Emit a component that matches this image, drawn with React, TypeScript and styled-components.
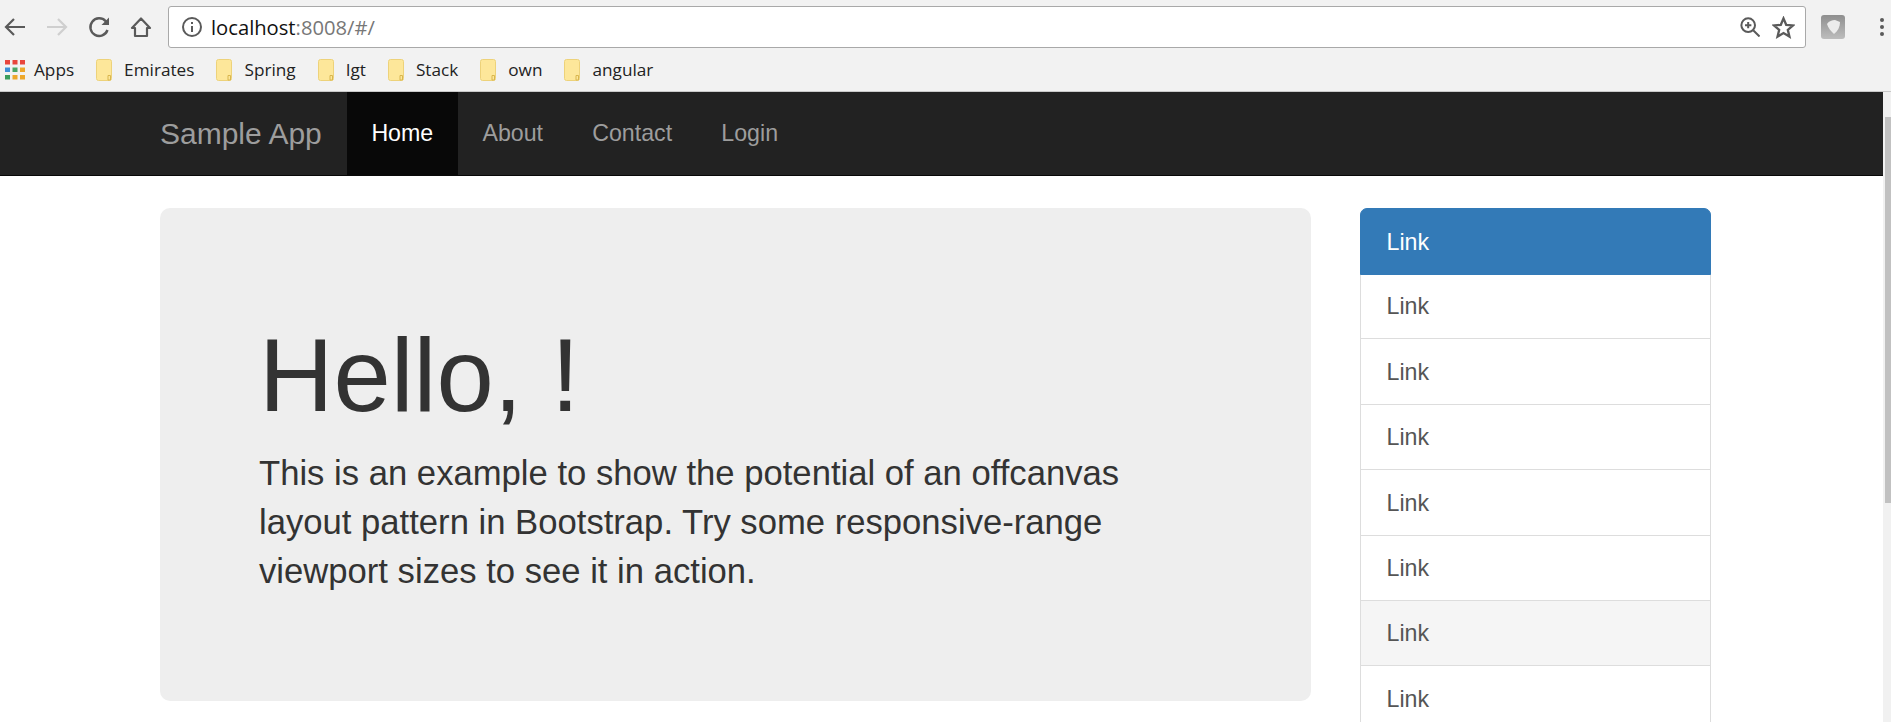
import styled, { createGlobalStyle } from "styled-components";

const GlobalStyle = createGlobalStyle`
  html, body {
    margin: 0;
    height: 722px;
    overflow: hidden;
    background: #fff;
    font-family: "Liberation Sans", Arial, sans-serif;
  }
  * { box-sizing: border-box; }
`;

const Toolbar = styled.div`
  display: flex;
  align-items: center;
  height: 48px;
  padding-top: 6px;
  background: #f2f2f2;
`;

const NavIcons = styled.div`
  display: flex;
  align-items: center;
  width: 168px;
  flex: none;
  padding-left: 3px;
  gap: 18px;
`;

const AddressBar = styled.div`
  display: flex;
  align-items: center;
  flex: 1;
  height: 42px;
  padding: 0 10px 0 12px;
  background: #fff;
  border: 1px solid #a9a9a9;
  border-radius: 3px;
`;

const Url = styled.span`
  flex: 1;
  margin-left: 8px;
  font-family: "Open Sans", sans-serif;
  font-size: 20.2px;
  color: #111;
`;

const UrlRest = styled.span`
  color: #777;
`;

const AddressIcons = styled.div`
  display: flex;
  align-items: center;
  gap: 12px;
`;

const ToolbarEnd = styled.div`
  display: flex;
  align-items: center;
  justify-content: space-between;
  width: 85px;
  flex: none;
  padding: 0 6px 0 15px;
`;

const Bookmarks = styled.div`
  display: flex;
  align-items: center;
  height: 44px;
  padding-left: 5px;
  background: #f2f2f2;
  border-bottom: 1px solid #c9c9c9;
`;

const Bookmark = styled.span<{ $gap: number }>`
  display: flex;
  align-items: center;
  gap: ${(p) => p.$gap}px;
  margin-right: 22px;
  font-family: "Open Sans", sans-serif;
  font-size: 17.2px;
  color: #222;
`;

const PageArea = styled.div`
  display: flex;
  height: 630px;
  overflow: hidden;
`;

const Page = styled.div`
  flex: 1;
  min-width: 0;
`;

const Scrollbar = styled.div`
  position: relative;
  width: 8px;
  flex: none;
  background: #f1f1f1;
`;

const ScrollThumb = styled.div`
  position: absolute;
  top: 25px;
  left: 2px;
  right: 0;
  height: 386px;
  background: #c1c1c1;
`;

const Navbar = styled.nav`
  display: flex;
  height: 84px;
  padding-left: 160px;
  background: #222;
  border-bottom: 1px solid #080808;
`;

const Brand = styled.a`
  display: flex;
  align-items: center;
  margin-right: 25px;
  font-size: 30px;
  color: #9d9d9d;
`;

const NavLink = styled.a<{ $active?: boolean }>`
  display: flex;
  align-items: center;
  padding: 0 24.6px;
  font-size: 23.2px;
  color: ${(p) => (p.$active ? "#fff" : "#9d9d9d")};
  background: ${(p) => (p.$active ? "#080808" : "transparent")};
`;

const Content = styled.div`
  display: flex;
  align-items: flex-start;
  gap: 49px;
  padding: 32px 0 0 160px;
`;

const Jumbotron = styled.div`
  width: 1151px;
  height: 493px;
  padding: 111px 100px 0 99px;
  background: #eee;
  border-radius: 10px;
`;

const Title = styled.h1`
  margin: 0;
  font-size: 103px;
  font-weight: 400;
  line-height: 113px;
  color: #333;
`;

const Lead = styled.p`
  margin: 17px 0 0;
  font-size: 34.65px;
  line-height: 49px;
  color: #333;
`;

const ListGroup = styled.div`
  width: 351px;
  flex: none;
`;

const ListItem = styled.a<{ $active?: boolean; $hover?: boolean }>`
  display: flex;
  align-items: center;
  position: ${(p) => (p.$active ? "relative" : "static")};
  z-index: ${(p) => (p.$active ? 1 : "auto")};
  height: ${(p) => (p.$active ? "67px" : "66.4px")};
  padding: 1.5px 0 0 25.5px;
  font-size: 23.2px;
  margin-bottom: ${(p) => (p.$active ? "-2px" : "-1px")};
  color: ${(p) => (p.$active ? "#fff" : "#555")};
  background: ${(p) => (p.$active ? "#337ab7" : p.$hover ? "#f5f5f5" : "#fff")};
  border: 1px solid ${(p) => (p.$active ? "#337ab7" : "#ddd")};
  border-radius: ${(p) => (p.$active ? "7px 7px 0 0" : "0")};
`;

const Back = () => (
  <svg width="24" height="24" viewBox="0 0 24 24" fill="none" stroke="#5a5a5a" strokeWidth="2.2">
    <path d="M22 12H3M11 4l-8 8 8 8" />
  </svg>
);

const Forward = () => (
  <svg width="24" height="24" viewBox="0 0 24 24" fill="none" stroke="#cfcfcf" strokeWidth="2.2">
    <path d="M2 12h19M13 4l8 8-8 8" />
  </svg>
);

const Reload = () => (
  <svg width="24" height="24" viewBox="0 0 24 24" fill="none" stroke="#5a5a5a" strokeWidth="2.4">
    <path d="M20.500 15a8.800 8.800 0 1 1-1.800-8.800L20 8" />
    <path d="M22 2.500V10h-7.500z" fill="#5a5a5a" stroke="none" />
  </svg>
);

const Home = () => (
  <svg width="24" height="24" viewBox="0 0 24 24" fill="none" stroke="#5a5a5a" strokeWidth="2.2">
    <path d="M12 3.500 21 13h-3v8H6v-8H3z" strokeLinejoin="round" />
  </svg>
);

const Info = () => (
  <svg width="22" height="22" viewBox="0 0 22 22" fill="none" stroke="#5a5a5a" strokeWidth="2">
    <circle cx="11" cy="11" r="9" />
    <path d="M11 10v6M11 6v2" />
  </svg>
);

const Zoom = () => (
  <svg width="20" height="20" viewBox="0 0 22 22" fill="none" stroke="#5a5a5a" strokeWidth="2.2">
    <circle cx="9" cy="9" r="7.500" />
    <path d="M14.500 14.500l7 7M9 5.500v7M5.500 9h7" />
  </svg>
);

const Star = () => (
  <svg width="23" height="23" viewBox="0 0 24 24" fill="none" stroke="#5a5a5a" strokeWidth="2.4">
    <path d="M12 2.500l2.800 6.700 7.200.6-5.500 4.700 1.700 7-6.200-3.700-6.200 3.700 1.700-7L2 9.800l7.200-.6z" />
  </svg>
);

const Extension = () => (
  <svg width="24" height="24" viewBox="0 0 24 24">
    <defs>
      <linearGradient id="ext" x1="0" y1="0" x2="0" y2="1">
        <stop offset="0" stopColor="#8f8f8f" />
        <stop offset="1" stopColor="#bdbdbd" />
      </linearGradient>
    </defs>
    <rect width="24" height="24" rx="3" fill="url(#ext)" />
    <path d="M6 9c2-3 5-4 8-4l5 2c0 5-2 9-6 12-3-3-6-6-7-10z" fill="#ececec" />
  </svg>
);

const Dots = () => (
  <svg width="6" height="20" viewBox="0 0 6 20" fill="#5a5a5a">
    <circle cx="3" cy="3" r="2" />
    <circle cx="3" cy="10" r="2" />
    <circle cx="3" cy="17" r="2" />
  </svg>
);

const AppsGrid = () => (
  <svg width="20" height="20" viewBox="0 0 20 20">
    <rect x="0" y="0" width="5" height="4.500" fill="#e8453c" />
    <rect x="7.500" y="0" width="5" height="4.500" fill="#e8453c" />
    <rect x="15" y="0" width="5" height="4.500" fill="#e8453c" />
    <rect x="0" y="7.500" width="5" height="4.500" fill="#3d8fd6" />
    <rect x="7.500" y="7.500" width="5" height="4.500" fill="#4aa564" />
    <rect x="15" y="7.500" width="5" height="4.500" fill="#eda82c" />
    <rect x="0" y="15" width="5" height="4.500" fill="#3a9d5d" />
    <rect x="7.500" y="15" width="5" height="4.500" fill="#eda82c" />
    <rect x="15" y="15" width="5" height="4.500" fill="#eda82c" />
  </svg>
);

const Folder = () => (
  <svg width="16" height="22" viewBox="0 0 16 22">
    <rect x="0.500" y="0.500" width="15" height="21" rx="2" fill="#fde79a" stroke="#edd27a" />
    <path d="M12 16.500h2.500V21H12z" fill="none" stroke="#d9b64e" />
  </svg>
);

const folders = ["Emirates", "Spring", "Igt", "Stack", "own", "angular"];
const links = ["Link", "Link", "Link", "Link", "Link", "Link", "Link", "Link"];

const App = () => {
  return (
    <>
      <GlobalStyle />
      <Toolbar>
        <NavIcons>
          <Back />
          <Forward />
          <Reload />
          <Home />
        </NavIcons>
        <AddressBar>
          <Info />
          <Url>
            localhost<UrlRest>:8008/#/</UrlRest>
          </Url>
          <AddressIcons>
            <Zoom />
            <Star />
          </AddressIcons>
        </AddressBar>
        <ToolbarEnd>
          <Extension />
          <Dots />
        </ToolbarEnd>
      </Toolbar>
      <Bookmarks>
        <Bookmark $gap={9}>
          <AppsGrid />
          Apps
        </Bookmark>
        {folders.map((name) => (
          <Bookmark key={name} $gap={12}>
            <Folder />
            {name}
          </Bookmark>
        ))}
      </Bookmarks>
      <PageArea>
        <Page>
          <Navbar>
            <Brand>Sample App</Brand>
            <NavLink $active>Home</NavLink>
            <NavLink>About</NavLink>
            <NavLink>Contact</NavLink>
            <NavLink>Login</NavLink>
          </Navbar>
          <Content>
            <Jumbotron>
              <Title>Hello, !</Title>
              <Lead>
                This is an example to show the potential of an offcanvas layout pattern in Bootstrap. Try some
                responsive-range viewport sizes to see it in action.
              </Lead>
            </Jumbotron>
            <ListGroup>
              {links.map((label, i) => (
                <ListItem key={i} $active={i === 0} $hover={i === 6}>
                  {label}
                </ListItem>
              ))}
            </ListGroup>
          </Content>
        </Page>
        <Scrollbar>
          <ScrollThumb />
        </Scrollbar>
      </PageArea>
    </>
  );
};

export default App;
